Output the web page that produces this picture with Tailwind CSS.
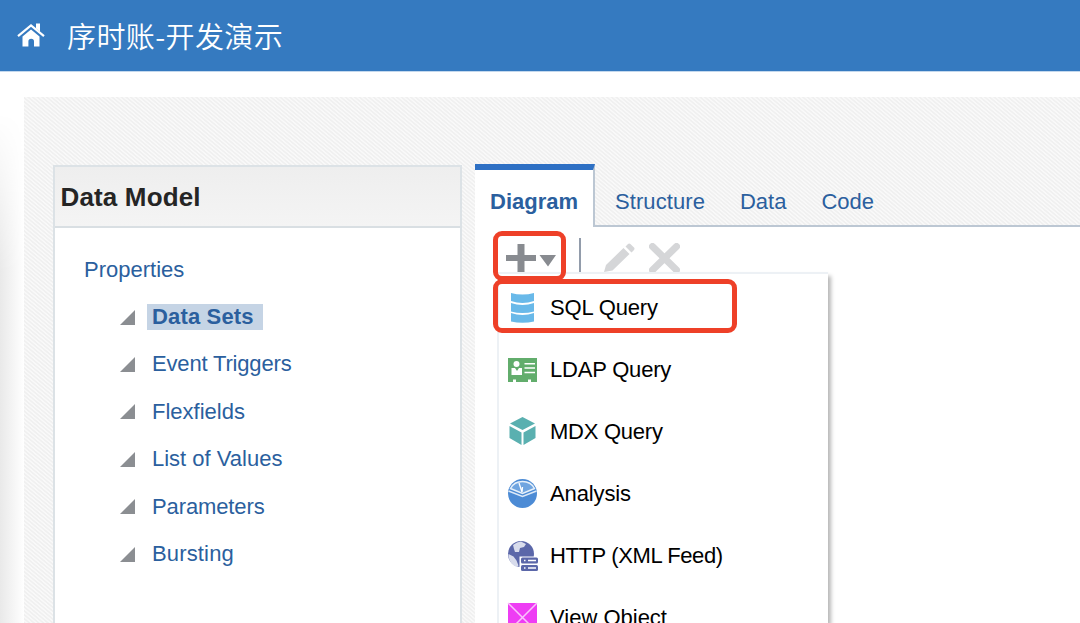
<!DOCTYPE html>
<html lang="en">
<head>
<meta charset="utf-8">
<title>Data Model</title>
<script src="https://cdn.jsdelivr.net/npm/@tailwindcss/browser@4"></script>
</head>
<body class="h-[623px] w-[1080px] overflow-hidden bg-white font-['Liberation_Sans','Noto_Sans_CJK_SC',sans-serif] text-[22px] leading-[26px]">
<header class="flex h-[72px] items-center border-b border-[#c3d8ed] bg-[#357ac0] pl-[17px] text-white">
  <svg class="mb-[2px] h-[26px] w-7" viewBox="0 0 28 26" fill="#fff"><path d="M5.500 14.500 14 7.500l8.500 7V24.500H17V19.500a2.800 2.800 0 0 0-5.600 0V24.500H5.500z"/><path d="M1 14.200 14 3.500l13 10.700" fill="none" stroke="#fff" stroke-width="2.200"/><path d="M19 1.500h4v8l-4-3z"/></svg>
  <h1 class="mb-[2px] ml-[22px] whitespace-nowrap font-['Noto_Sans_CJK_SC',sans-serif] text-[29px] leading-[40px] font-[350] tracking-[0.4px]">序时账-开发演示</h1>
</header>
<main class="flex h-[551px]">
  <div class="w-6 shrink-0 bg-linear-to-r from-[#e9e9e9] to-white [mask-image:linear-gradient(to_bottom,transparent_40px,black_200px)]"></div>
  <div class="mt-[25px] flex flex-1 bg-[repeating-linear-gradient(40deg,#f0f0f0_0px,#f0f0f0_1px,#f9f9f9_1.600px,#f9f9f9_2.400px,#f0f0f0_3px)] pl-[29px]">
    <section class="mt-[68px] w-[409px] shrink-0 border-2 border-b-0 border-[#dce2e6] bg-white">
      <h2 class="flex h-[61px] items-center border-b-2 border-[#d9dfe3] bg-linear-to-b from-[#eeeeee] to-[#f4f4f4] pl-[5.500px] text-[26px] font-bold tracking-[0.15px] text-[#252525]">Data Model</h2>
      <nav class="flex flex-col pt-[18px] pl-[29px] text-[#2b5f9e]">
        <a class="flex h-[47.400px] items-center">Properties</a>
        <a class="flex h-[47.400px] items-center pl-[36px]"><svg class="mr-3 size-[15px]" viewBox="0 0 15 15"><path d="M0 15 15 0V15z" fill="#8b8e92"/></svg><b class="bg-[#c5d4e5] pr-[9px] pl-[5px] tracking-[0.16px]">Data Sets</b></a>
        <a class="flex h-[47.400px] items-center pl-[36px]"><svg class="mr-[17px] size-[15px]" viewBox="0 0 15 15"><path d="M0 15 15 0V15z" fill="#8b8e92"/></svg><span class="tracking-[-0.17px]">Event Triggers</span></a>
        <a class="flex h-[47.400px] items-center pl-[36px]"><svg class="mr-[17px] size-[15px]" viewBox="0 0 15 15"><path d="M0 15 15 0V15z" fill="#8b8e92"/></svg>Flexfields</a>
        <a class="flex h-[47.400px] items-center pl-[36px]"><svg class="mr-[17px] size-[15px]" viewBox="0 0 15 15"><path d="M0 15 15 0V15z" fill="#8b8e92"/></svg>List of Values</a>
        <a class="flex h-[47.400px] items-center pl-[36px]"><svg class="mr-[17px] size-[15px]" viewBox="0 0 15 15"><path d="M0 15 15 0V15z" fill="#8b8e92"/></svg><span class="tracking-[-0.12px]">Parameters</span></a>
        <a class="flex h-[47.400px] items-center pl-[36px]"><svg class="mr-[17px] size-[15px]" viewBox="0 0 15 15"><path d="M0 15 15 0V15z" fill="#8b8e92"/></svg><span class="tracking-[0.15px]">Bursting</span></a>
      </nav>
    </section>
    <section class="relative mt-[67px] ml-[13px] flex flex-1 flex-col">
      <div class="flex h-[63px] shrink-0 text-[#2b5f9e]">
        <div class="w-[120px] shrink-0 border-t-[6px] border-r-2 border-t-[#2e70c4] border-r-[#bcc7d3] bg-white pt-[19px] pl-[15px] font-bold">Diagram</div>
        <div class="flex flex-1 gap-[35px] border-b-2 border-[#bcc7d3] pt-[25px] pl-5"><span class="tracking-[0.08px]">Structure</span><span>Data</span><span>Code</span></div>
      </div>
      <div class="flex-1 bg-white">
        <div class="flex h-[46px] items-start pt-[11px] pl-[31px]">
          <svg class="mt-[5px] h-[30px] w-[50px]" viewBox="0 0 50 30" fill="#888b90"><path d="M11.500 1h7v11H30v6H18.500v11h-7V18H0v-6h11.500zM33.500 12h16.500l-8 11.500z"/></svg>
          <i class="ml-[23px] h-[35px] w-[2px] bg-[#929cab]"></i>
          <svg class="mt-[5px] ml-[23px] h-[30px] w-[31px]" viewBox="0 0 31 30" fill="#d5d6d8"><path d="M0 29 2 22 19.500 5 25.500 11 8.500 27.500zM21.500 3.500l2.500-2.500q1.200-1 2.400 0L30 4.500q1 1.200 0 2.400L27.500 9.500z"/></svg>
          <svg class="mt-[5px] ml-[14px] h-[30px] w-[31px]" viewBox="0 0 31 30" fill="none"><path d="M3.500 3.500 27.500 27M27.500 3.500 3.500 27" stroke="#d5d6d8" stroke-width="7" stroke-linecap="round"/></svg>
        </div>
      </div>
      <div class="absolute top-[108px] left-[22px] h-[352px] w-[331px] border-t-2 border-l-2 border-[#edf1f5] bg-white pl-[8px] text-black shadow-[4px_3px_4px_-1px_#b8b8b8]">
        <div class="flex h-[62px] items-center gap-[12px] pt-[5px]"><svg class="size-[31px]" viewBox="0 0 31 31"><g fill="#69b9e9"><path d="M4 1q11.500 3 23 0v8q-11.500 4-23 0zM4 11q11.500 4 23 0v8.500q-11.500 3-23 0zM4 21q11.500 4 23 0v8.500q-11.500 2.500-23 0z"/></g></svg><span class="tracking-[-0.15px]">SQL Query</span></div>
        <div class="flex h-[62px] items-center gap-[12px] pt-[5px]"><svg class="size-[31px]" viewBox="0 0 31 31"><path d="M1 4h29v24h-6v-2.500h-3V28H9v-2.500H6V28H1z" fill="#62ad6c"/><g fill="#fff"><circle cx="9.500" cy="10" r="3"/><path d="M4.500 14H8l2 3 2-3h3v7h-10.500zM17.500 9h10.500v1.500H17.500zm0 4.300h10.500v1.500H17.500zm0 4.400h10.500v1.500H17.500z"/></g></svg><span class="tracking-[-0.2px]">LDAP Query</span></div>
        <div class="flex h-[62px] items-center gap-[12px] pt-[5px]"><svg class="size-[31px]" viewBox="0 0 31 31" fill="#5ab0b0"><path d="M15.500 1 28 7.500 15.500 14 3 7.500zM2.500 10l12 6.500V29L2.500 22zM28.500 10l-12 6.500V29l12-7z"/></svg><span class="tracking-[-0.25px]">MDX Query</span></div>
        <div class="flex h-[62px] items-center gap-[12px] pt-[5px]"><svg class="size-[31px]" viewBox="0 0 31 31"><circle cx="15.500" cy="15.500" r="14.500" fill="#4c8bd5"/><path d="M3.500 10.500Q7 3.500 15.500 3.500 24 3.500 27.500 10.500L15.500 15.500z" fill="#70a5e0" stroke="#e6f0fa" stroke-width="1.500"/><path d="M1.500 13l14 5.500L29.500 13" fill="none" stroke="#dce9f8" stroke-width="1.500"/><path d="M12 5l3 9 .5-5" fill="none" stroke="#fff" stroke-width="1.300"/></svg><span class="tracking-[-0.12px]">Analysis</span></div>
        <div class="flex h-[62px] items-center gap-[12px] pt-[5px]"><svg class="size-[31px]" viewBox="0 0 31 31"><circle cx="14" cy="14" r="13" fill="#5b67a9"/><path d="M6 5q4-3.500 8-3.500l5 2.500-2 3-4 1-1 4-4 0-1-3zM1.500 14l5 2.500 3 4 2 5-2 1.500q-7-3-8-11z" fill="#d8dcec"/><path d="M12.500 16.500H31V31H12.500z" fill="#fff"/><rect x="14" y="17.500" width="17" height="6" rx="1.500" fill="#5b67a9"/><rect x="14" y="25" width="17" height="6" rx="1.500" fill="#5b67a9"/><path d="M17 20.500h1.500M21 20.500h8M17 28h1.500M21 28h8" stroke="#fff" stroke-width="1.300"/></svg><span class="tracking-[-0.38px]">HTTP (XML Feed)</span></div>
        <div class="flex h-[62px] items-center gap-[12px] pt-[5px]"><svg class="size-[31px]" viewBox="0 0 31 31"><path d="M1 1h29v29H1z" fill="#ee3df4"/><path d="M1 1l29 29M30 1 1 30" stroke="#fac3fc" stroke-width="1.500"/></svg><span>View Object</span></div>
      </div>
      <i class="absolute top-[67px] left-[18px] h-[50px] w-[73px] rounded-[9px] border-[5px] border-[#ee4028]"></i>
      <i class="absolute top-[115px] left-[18px] h-[54px] w-[244px] rounded-[9px] border-[5px] border-[#ee4028]"></i>
    </section>
  </div>
</main>
</body>
</html>
